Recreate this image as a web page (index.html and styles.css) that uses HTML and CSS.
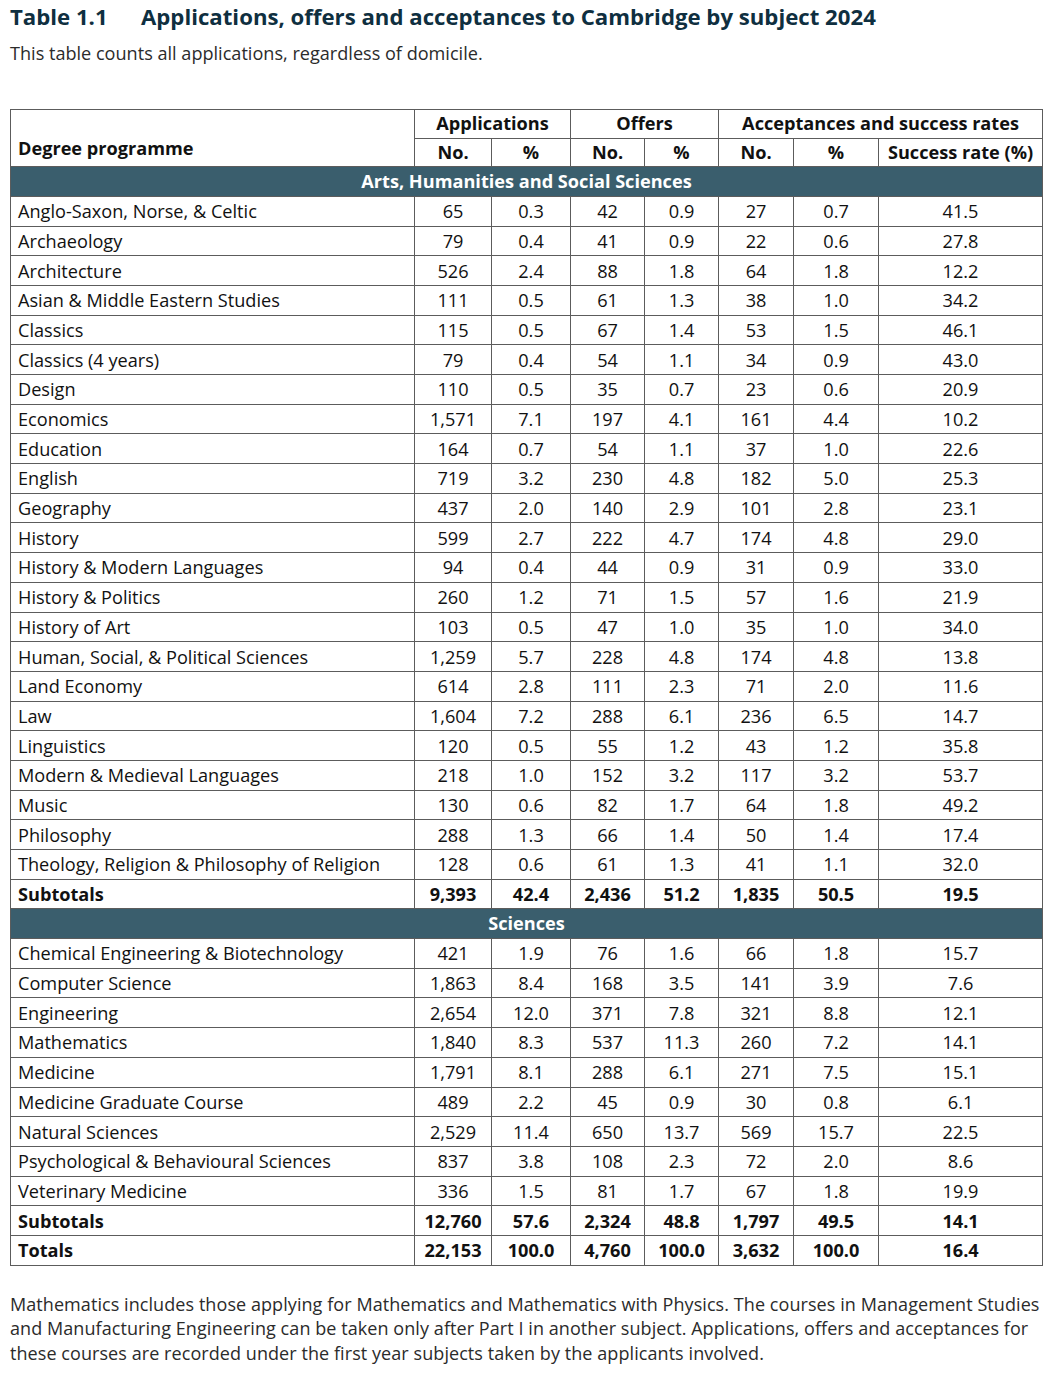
FILE: index.html
```html
<!DOCTYPE html>
<html lang="en">
<head>
<meta charset="utf-8">
<title>Table 1.1</title>
<link rel="stylesheet" href="styles.css">
</head>
<body>
<div class="page">
  <h1 class="title"><span class="tnum">Table 1.1</span><span class="tname">Applications, offers and acceptances to Cambridge by subject 2024</span></h1>
  <p class="subtitle">This table counts all applications, regardless of domicile.</p>

  <table class="data">
    <colgroup>
      <col class="c-name"><col class="c-a1"><col class="c-a2"><col class="c-o1"><col class="c-o2"><col class="c-x1"><col class="c-x2"><col class="c-sr">
    </colgroup>
    <thead>
      <tr class="hrow hrow-top">
        <th rowspan="2" class="hname">Degree programme</th>
        <th colspan="2">Applications</th>
        <th colspan="2">Offers</th>
        <th colspan="3">Acceptances and success rates</th>
      </tr>
      <tr class="hrow">
        <th>No.</th><th>%</th><th>No.</th><th>%</th><th>No.</th><th>%</th><th>Success rate (%)</th>
      </tr>
    </thead>
    <tbody>
      <tr class="section"><td colspan="8">Arts, Humanities and Social Sciences</td></tr>
      <tr><td>Anglo-Saxon, Norse, &amp; Celtic</td><td>65</td><td>0.3</td><td>42</td><td>0.9</td><td>27</td><td>0.7</td><td>41.5</td></tr>
      <tr><td>Archaeology</td><td>79</td><td>0.4</td><td>41</td><td>0.9</td><td>22</td><td>0.6</td><td>27.8</td></tr>
      <tr><td>Architecture</td><td>526</td><td>2.4</td><td>88</td><td>1.8</td><td>64</td><td>1.8</td><td>12.2</td></tr>
      <tr><td>Asian &amp; Middle Eastern Studies</td><td>111</td><td>0.5</td><td>61</td><td>1.3</td><td>38</td><td>1.0</td><td>34.2</td></tr>
      <tr><td>Classics</td><td>115</td><td>0.5</td><td>67</td><td>1.4</td><td>53</td><td>1.5</td><td>46.1</td></tr>
      <tr><td>Classics (4 years)</td><td>79</td><td>0.4</td><td>54</td><td>1.1</td><td>34</td><td>0.9</td><td>43.0</td></tr>
      <tr><td>Design</td><td>110</td><td>0.5</td><td>35</td><td>0.7</td><td>23</td><td>0.6</td><td>20.9</td></tr>
      <tr><td>Economics</td><td>1,571</td><td>7.1</td><td>197</td><td>4.1</td><td>161</td><td>4.4</td><td>10.2</td></tr>
      <tr><td>Education</td><td>164</td><td>0.7</td><td>54</td><td>1.1</td><td>37</td><td>1.0</td><td>22.6</td></tr>
      <tr><td>English</td><td>719</td><td>3.2</td><td>230</td><td>4.8</td><td>182</td><td>5.0</td><td>25.3</td></tr>
      <tr><td>Geography</td><td>437</td><td>2.0</td><td>140</td><td>2.9</td><td>101</td><td>2.8</td><td>23.1</td></tr>
      <tr><td>History</td><td>599</td><td>2.7</td><td>222</td><td>4.7</td><td>174</td><td>4.8</td><td>29.0</td></tr>
      <tr><td>History &amp; Modern Languages</td><td>94</td><td>0.4</td><td>44</td><td>0.9</td><td>31</td><td>0.9</td><td>33.0</td></tr>
      <tr><td>History &amp; Politics</td><td>260</td><td>1.2</td><td>71</td><td>1.5</td><td>57</td><td>1.6</td><td>21.9</td></tr>
      <tr><td>History of Art</td><td>103</td><td>0.5</td><td>47</td><td>1.0</td><td>35</td><td>1.0</td><td>34.0</td></tr>
      <tr><td>Human, Social, &amp; Political Sciences</td><td>1,259</td><td>5.7</td><td>228</td><td>4.8</td><td>174</td><td>4.8</td><td>13.8</td></tr>
      <tr><td>Land Economy</td><td>614</td><td>2.8</td><td>111</td><td>2.3</td><td>71</td><td>2.0</td><td>11.6</td></tr>
      <tr><td>Law</td><td>1,604</td><td>7.2</td><td>288</td><td>6.1</td><td>236</td><td>6.5</td><td>14.7</td></tr>
      <tr><td>Linguistics</td><td>120</td><td>0.5</td><td>55</td><td>1.2</td><td>43</td><td>1.2</td><td>35.8</td></tr>
      <tr><td>Modern &amp; Medieval Languages</td><td>218</td><td>1.0</td><td>152</td><td>3.2</td><td>117</td><td>3.2</td><td>53.7</td></tr>
      <tr><td>Music</td><td>130</td><td>0.6</td><td>82</td><td>1.7</td><td>64</td><td>1.8</td><td>49.2</td></tr>
      <tr><td>Philosophy</td><td>288</td><td>1.3</td><td>66</td><td>1.4</td><td>50</td><td>1.4</td><td>17.4</td></tr>
      <tr><td>Theology, Religion &amp; Philosophy of Religion</td><td>128</td><td>0.6</td><td>61</td><td>1.3</td><td>41</td><td>1.1</td><td>32.0</td></tr>
      <tr class="total"><td>Subtotals</td><td>9,393</td><td>42.4</td><td>2,436</td><td>51.2</td><td>1,835</td><td>50.5</td><td>19.5</td></tr>
      <tr class="section"><td colspan="8">Sciences</td></tr>
      <tr><td>Chemical Engineering &amp; Biotechnology</td><td>421</td><td>1.9</td><td>76</td><td>1.6</td><td>66</td><td>1.8</td><td>15.7</td></tr>
      <tr><td>Computer Science</td><td>1,863</td><td>8.4</td><td>168</td><td>3.5</td><td>141</td><td>3.9</td><td>7.6</td></tr>
      <tr><td>Engineering</td><td>2,654</td><td>12.0</td><td>371</td><td>7.8</td><td>321</td><td>8.8</td><td>12.1</td></tr>
      <tr><td>Mathematics</td><td>1,840</td><td>8.3</td><td>537</td><td>11.3</td><td>260</td><td>7.2</td><td>14.1</td></tr>
      <tr><td>Medicine</td><td>1,791</td><td>8.1</td><td>288</td><td>6.1</td><td>271</td><td>7.5</td><td>15.1</td></tr>
      <tr><td>Medicine Graduate Course</td><td>489</td><td>2.2</td><td>45</td><td>0.9</td><td>30</td><td>0.8</td><td>6.1</td></tr>
      <tr><td>Natural Sciences</td><td>2,529</td><td>11.4</td><td>650</td><td>13.7</td><td>569</td><td>15.7</td><td>22.5</td></tr>
      <tr><td>Psychological &amp; Behavioural Sciences</td><td>837</td><td>3.8</td><td>108</td><td>2.3</td><td>72</td><td>2.0</td><td>8.6</td></tr>
      <tr><td>Veterinary Medicine</td><td>336</td><td>1.5</td><td>81</td><td>1.7</td><td>67</td><td>1.8</td><td>19.9</td></tr>
      <tr class="total"><td>Subtotals</td><td>12,760</td><td>57.6</td><td>2,324</td><td>48.8</td><td>1,797</td><td>49.5</td><td>14.1</td></tr>
      <tr class="total"><td>Totals</td><td>22,153</td><td>100.0</td><td>4,760</td><td>100.0</td><td>3,632</td><td>100.0</td><td>16.4</td></tr>
    </tbody>
  </table>

  <p class="note">Mathematics includes those applying for Mathematics and Mathematics with Physics. The courses in Management Studies and Manufacturing Engineering can be taken only after Part I in another subject. Applications, offers and acceptances for these courses are recorded under the first year subjects taken by the applicants involved.</p>
</div>
</body>
</html>
```

FILE: styles.css
```css
html, body {
  margin: 0;
  padding: 0;
  background: #ffffff;
}

body {
  font-family: "Open Sans", "Noto Sans", sans-serif;
  color: #1a1a1a;
}

.page {
  padding: 0 10px;
}

.title {
  margin: 0;
  padding-top: 3px;
  font-size: 22.2px;
  line-height: 28px;
  font-weight: 700;
  color: #0f2f40;
  display: flex;
}

.tnum {
  width: 131px;
  flex: none;
}

.subtitle {
  margin: 10px 0 0;
  font-size: 18.1px;
  line-height: 24px;
  color: #2b2b2b;
}

.data {
  margin-top: 44px;
  width: 1032px;
  table-layout: fixed;
  border-collapse: collapse;
  font-size: 18.15px;
  color: #111;
}

.c-name { width: 404px; }
.c-a1 { width: 77px; }
.c-a2 { width: 79px; }
.c-o1 { width: 74px; }
.c-o2 { width: 74px; }
.c-x1 { width: 75px; }
.c-x2 { width: 85px; }
.c-sr { width: 164px; }

.data th,
.data td {
  border: 1px solid #5c5c5c;
  padding: 0;
  height: 28.7px;
  line-height: 20px;
  text-align: center;
  white-space: nowrap;
  overflow: hidden;
}

.data th {
  font-weight: 700;
  height: 27.6px;
}

.data .hrow-top th {
  height: 25.6px;
  padding-bottom: 2px;
}

.data .hrow-top th.hname {
  height: auto;
  text-align: left;
  padding-left: 7px;
  vertical-align: bottom;
  padding-bottom: 8px;
}

.data td:first-child {
  text-align: left;
  padding-left: 7px;
}

.data tr.section td {
  background: #3a5e6d;
  color: #ffffff;
  font-weight: 700;
  text-align: center;
  padding-left: 0;
  line-height: 18px;
  height: 26.7px;
  padding-bottom: 2px;
}

.data tr.total td {
  font-weight: 700;
}

.note {
  margin: 26px 0 0;
  font-size: 18px;
  line-height: 24.5px;
  color: #2b2b2b;
  letter-spacing: 0.07px;
}
```
